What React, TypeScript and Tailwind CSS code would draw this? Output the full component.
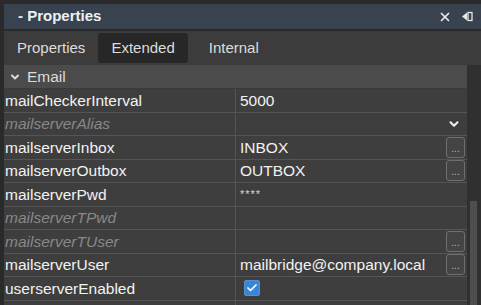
import { Check, ChevronDown, X } from "lucide-react";

type Row = {
    name: string;
    value?: string;
    disabled?: boolean;
    browse?: boolean;
    select?: boolean;
    checkbox?: boolean;
    masked?: boolean;
};

const rows: Row[] = [
    { name: "mailCheckerInterval", value: "5000" },
    { name: "mailserverAlias", disabled: true, select: true },
    { name: "mailserverInbox", value: "INBOX", browse: true },
    { name: "mailserverOutbox", value: "OUTBOX", browse: true },
    { name: "mailserverPwd", value: "****", masked: true },
    { name: "mailserverTPwd", disabled: true },
    { name: "mailserverTUser", disabled: true, browse: true },
    { name: "mailserverUser", value: "mailbridge@company.local", browse: true },
    { name: "userserverEnabled", checkbox: true },
    { name: "" },
];

const BrowseButton = () => (
    <button className="mr-[2px] flex h-[21px] w-[19px] items-end justify-center rounded-[3px] border border-[#6f6f6f] bg-[#444] pb-[3px] text-[10px] leading-none text-[#bbb]">
        ...
    </button>
);

const App = () => {
    return (
        <div
            className="flex h-[305px] w-[481px] flex-col overflow-hidden bg-[#2a2a2a] pt-1"
            style={{ fontFamily: '"Liberation Sans", Arial, sans-serif' }}
        >
            {/* title bar */}
            <div className="ml-1 flex h-[25px] shrink-0 items-center justify-between bg-[#38434f] pl-[14px] pr-[8px]">
                <span className="text-[15px] font-bold text-[#f0f0f0]">- Properties</span>
                <div className="flex items-center gap-[10px] text-[#e8e8e8]">
                    <X size={14} strokeWidth={3} />
                    <svg width="11" height="11" viewBox="0 0 11 11">
                        <path d="M0 5.5 L5 1.5 L5 9.5 Z" fill="#e8e8e8" />
                        <rect x="6" y="1.5" width="4" height="8" fill="none" stroke="#e8e8e8" strokeWidth="1.3" />
                    </svg>
                </div>
            </div>
            <div className="h-[2px] shrink-0 bg-[#2a2a2a]" />

            {/* tabs */}
            <div className="ml-1 flex h-[34px] shrink-0 items-center bg-[#3c3c3c] text-[15px] text-[#dcdcdc]">
                <div className="px-[13px]">Properties</div>
                <div className="flex h-[30px] items-center rounded-[3px] bg-[#272727] px-[13px]">Extended</div>
                <div className="px-[21px]">Internal</div>
            </div>

            <div className="ml-1 flex min-h-0 flex-1">
                <div className="flex-1 bg-[#3e3e3e]">
                    {/* group header */}
                    <div className="flex h-[24px] items-center gap-[6px] border-b border-[#3a3a3a] bg-[#4b4b4b] pl-[5px] text-[15.5px] text-[#dcdcdc]">
                        <ChevronDown size={12} strokeWidth={4} />
                        <span>Email</span>
                    </div>
                    {rows.map((row, i) => (
                        <div key={i} className="flex h-[23.5px] border-b border-[#555] text-[15.5px]">
                            <div
                                className={
                                    "flex w-[232px] items-center border-r border-[#555] pl-px " +
                                    (row.disabled ? "italic text-[#888]" : "text-[#f2f2f2]")
                                }
                            >
                                {row.name}
                            </div>
                            <div className="flex flex-1 items-center justify-between pl-[4px] text-[#f2f2f2]">
                                {row.checkbox ? (
                                    <span className="ml-[4px] flex h-[16px] w-[16px] items-center justify-center rounded-[2px] border border-[#5a8fcc] bg-[#3a86d6]">
                                        <Check size={12} strokeWidth={3.5} color="#fff" />
                                    </span>
                                ) : (
                                    <span className={row.masked ? "text-[11px] tracking-[1px] text-[#d8d8d8]" : ""}>
                                        {row.value}
                                    </span>
                                )}
                                {row.browse && <BrowseButton />}
                                {row.select && (
                                    <ChevronDown size={14} strokeWidth={3.5} className="mr-[6px] text-[#f0f0f0]" />
                                )}
                            </div>
                        </div>
                    ))}
                </div>

                {/* scrollbar */}
                <div className="flex w-[14px] flex-col bg-[#303030] pt-[136px]">
                    <div className="ml-[3px] h-[110px] w-[7px] bg-[#4e4e4e]" />
                </div>
            </div>
        </div>
    );
};

export default App;
